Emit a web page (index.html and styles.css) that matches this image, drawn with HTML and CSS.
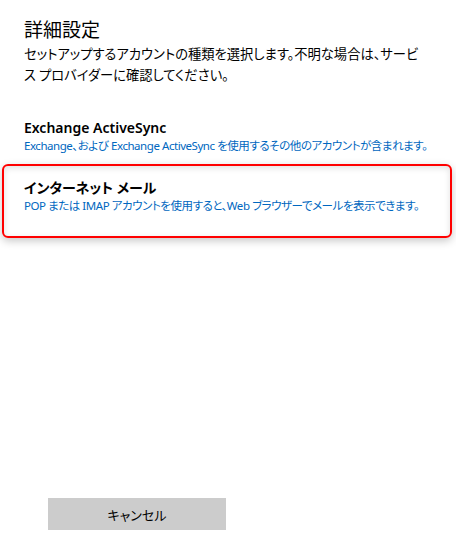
FILE: index.html
```html
<!DOCTYPE html>
<html lang="ja">
<head>
<meta charset="utf-8">
<link rel="stylesheet" href="styles.css">
</head>
<body>
<div class="page">
  <header class="head">
    <h1 class="title">詳細設定</h1>
    <p class="desc">セットアップするアカウントの種類を選択します。不明な場合は、サービ<br>ス プロバイダーに確認してください。</p>
  </header>
  <ul class="accounts">
    <li class="account">
      <div class="account-name">Exchange ActiveSync</div>
      <div class="account-info">Exchange、および Exchange ActiveSync を使用するその他のアカウントが含まれます。</div>
    </li>
    <li class="account selected">
      <div class="account-name">インターネット メール</div>
      <div class="account-info">POP または IMAP アカウントを使用すると、Web ブラウザーでメールを表示できます。</div>
    </li>
  </ul>
  <div class="actions">
    <button class="cancel">キャンセル</button>
  </div>
</div>
</body>
</html>
```
FILE: styles.css
```css
html, body {
  margin: 0;
  padding: 0;
  background: #ffffff;
}
body {
  font-family: "Noto Sans", "Noto Sans CJK JP", sans-serif;
  font-feature-settings: "palt";
  color: #000;
}
.page {
  height: 544px;
  display: flex;
  flex-direction: column;
  box-sizing: border-box;
  padding: 16px 0 14px;
}
.head {
  padding-left: 24px;
}
.title {
  margin: 0;
  font-size: 19px;
  font-weight: 400;
  line-height: 26px;
  font-family: "Noto Sans CJK JP", sans-serif;
}
.desc {
  margin: 1px 0 0;
  font-size: 13.3px;
  letter-spacing: 0;
  line-height: 21px;
  font-family: "Noto Sans CJK JP", sans-serif;
}
.accounts {
  list-style: none;
  margin: 19px 4px 0 2px;
  padding: 0;
  display: flex;
  flex-direction: column;
  gap: 4px;
}
.account {
  border: 2px solid transparent;
  border-radius: 6px;
  padding: 12px 20px 4px;
}
.account.selected {
  border-color: #ff0000;
  padding-top: 12px;
  padding-bottom: 22px;
  box-shadow: 0 3px 8px rgba(0, 0, 0, 0.22), inset 0 2px 6px rgba(0, 0, 0, 0.12);
}
.account-name {
  font-size: 14px;
  font-weight: 600;
  line-height: 19px;
}
.account-info {
  font-size: 11.5px;
  letter-spacing: -0.45px;
  line-height: 17px;
  color: #0067c0;
  white-space: nowrap;
}
.actions {
  margin-top: auto;
  padding-left: 48px;
}
.cancel {
  width: 178px;
  height: 32px;
  border: none;
  background: #cccccc;
  font-family: "Noto Sans CJK JP", sans-serif;
  font-feature-settings: "palt";
  font-size: 13px;
  color: #000;
  padding: 0;
}
```
